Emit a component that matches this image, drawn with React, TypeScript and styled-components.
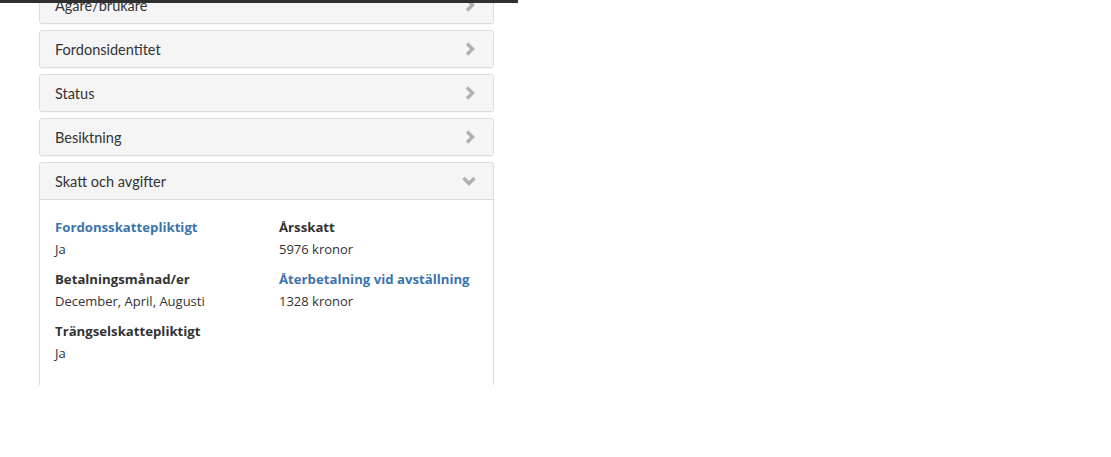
import * as React from "react"
import styled, { createGlobalStyle } from "styled-components"

const GlobalStyle = createGlobalStyle`
  html, body {
    margin: 0;
    padding: 0;
    background: #fff;
    overflow: hidden;
  }
  body {
    font-family: "Lato", "Open Sans", sans-serif;
    color: #333;
  }
`

type Field = {
  label: string
  value: string
  link?: boolean
}

const leftFields: Field[] = [
  { label: "Fordonsskattepliktigt", value: "Ja", link: true },
  { label: "Betalningsmånad/er", value: "December, April, Augusti" },
  { label: "Trängselskattepliktigt", value: "Ja" },
]

const rightFields: Field[] = [
  { label: "Årsskatt", value: "5976 kronor" },
  { label: "Återbetalning vid avställning", value: "1328 kronor", link: true },
]

const closedPanels = ["Ägare/brukare", "Fordonsidentitet", "Status", "Besiktning"]

// bold chevron, same look as the site's icon font
const ChevronIcon = ({ down }: { down?: boolean }) => (
  <svg
    width="16"
    height="16"
    viewBox="0 0 16 16"
    style={{ transform: down ? "rotate(90deg)" : undefined }}
  >
    <path
      d="M5 2.5 L10.5 8 L5 13.5"
      fill="none"
      stroke="currentColor"
      strokeWidth="3.4"
      strokeLinecap="butt"
      strokeLinejoin="miter"
    />
  </svg>
)

const FieldColumn = ({ fields }: { fields: Field[] }) => (
  <Column>
    {fields.map(f => (
      <FieldItem key={f.label}>
        <Label link={f.link}>{f.label}</Label>
        <Value>{f.value}</Value>
      </FieldItem>
    ))}
  </Column>
)

const App = () => {
  return (
    <>
      <GlobalStyle />
      <TopBar />
      <Page>
        <Accordion>
          {closedPanels.map(title => (
            <Panel key={title}>
              <PanelHeader>
                <Title>{title}</Title>
                <Chevron>
                  <ChevronIcon />
                </Chevron>
              </PanelHeader>
            </Panel>
          ))}
          <Panel open>
            <PanelHeader open>
              <Title>Skatt och avgifter</Title>
              <Chevron down>
                <ChevronIcon down />
              </Chevron>
            </PanelHeader>
            <PanelBody>
              <FieldColumn fields={leftFields} />
              <FieldColumn fields={rightFields} />
            </PanelBody>
          </Panel>
        </Accordion>
      </Page>
    </>
  )
}

const TopBar = styled.div`
  position: fixed;
  top: 0;
  left: 0;
  width: 518px;
  height: 3px;
  background: #2f2f2f;
  z-index: 5;
`

const Page = styled.div`
  padding-left: 39px;
  width: 455px;
`

const Accordion = styled.div`
  display: flex;
  flex-direction: column;
  gap: 6px;
  margin-top: -14px;
`

const Panel = styled.div<{ open?: boolean }>`
  border: 1px solid #dcdcdc;
  border-radius: 3px;
  background: #fff;
  box-shadow: 0 1px 1px rgba(0, 0, 0, 0.04);
  ${({ open }) =>
    open &&
    `
    border-bottom: none;
    border-bottom-left-radius: 0;
    border-bottom-right-radius: 0;
  `}
`

const PanelHeader = styled.div<{ open?: boolean }>`
  height: 36px;
  display: flex;
  align-items: center;
  justify-content: space-between;
  padding: 0 15px 0 15px;
  background: #f5f5f5;
  border-radius: 3px;
  ${({ open }) =>
    open &&
    `
    border-bottom: 1px solid #dcdcdc;
    border-bottom-left-radius: 0;
    border-bottom-right-radius: 0;
  `}
`

const Title = styled.span`
  font-family: "Lato", sans-serif;
  font-size: 14.5px;
  color: #333;
`

const Chevron = styled.span<{ down?: boolean }>`
  display: flex;
  color: #b0b0b0;
  margin-right: ${({ down }) => (down ? "1px" : "0")};
`

const PanelBody = styled.div`
  display: grid;
  grid-template-columns: 224px 1fr;
  padding: 18px 15px 0;
  height: 167px;
`

const Column = styled.div`
  display: flex;
  flex-direction: column;
  gap: 12px;
`

const FieldItem = styled.div`
  display: flex;
  flex-direction: column;
  gap: 4px;
`

const Label = styled.span<{ link?: boolean }>`
  font-family: "Open Sans", sans-serif;
  font-weight: 700;
  font-size: 13.2px;
  line-height: 18px;
  color: ${({ link }) => (link ? "#3b73ad" : "#333")};
`

const Value = styled.span`
  font-family: "Open Sans", sans-serif;
  font-size: 13px;
  line-height: 18px;
  color: #333;
`

export default App
